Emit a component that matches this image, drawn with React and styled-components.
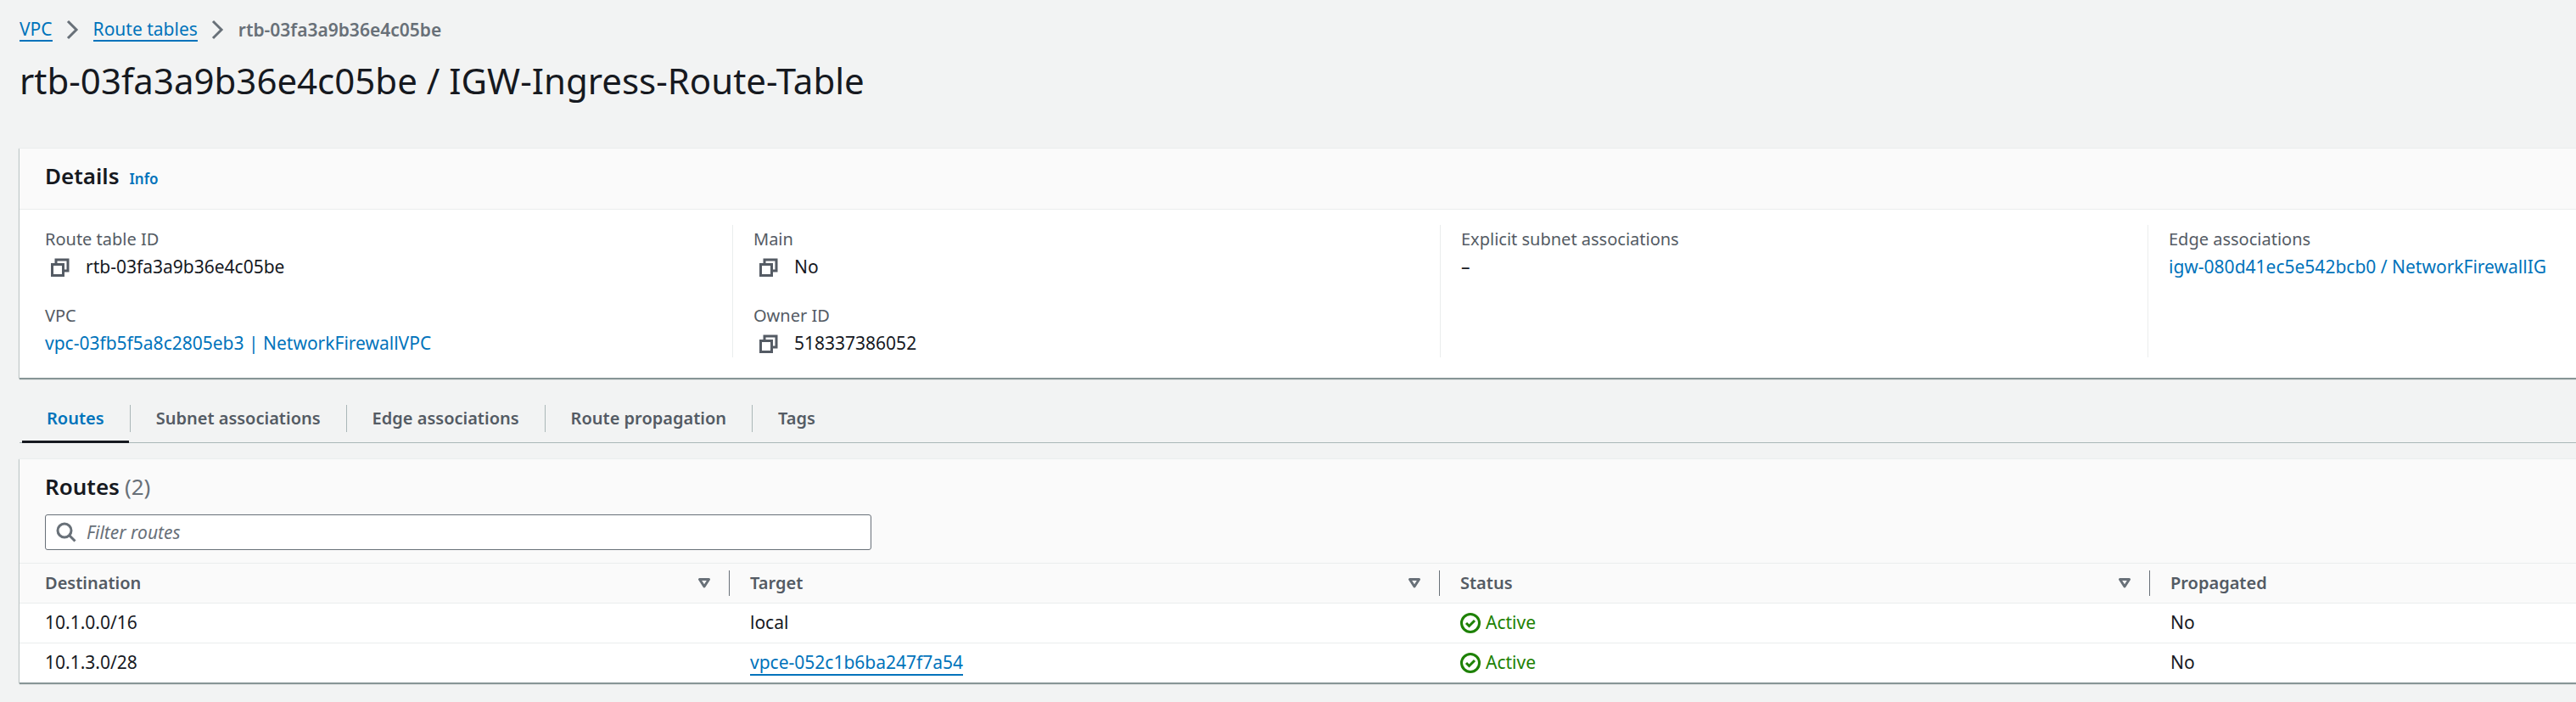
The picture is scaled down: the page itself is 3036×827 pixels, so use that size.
import React from 'react';
import styled, { createGlobalStyle, css } from 'styled-components';

const Global = createGlobalStyle`
  *, *::before, *::after { box-sizing: border-box; }
  body {
    margin: 0;
    background: #f2f3f3;
    color: #16191f;
    font: 21px/33px "Noto Sans", sans-serif;
  }
`;

const Page = styled.main`
  padding: 18px 0 23px 23px;
`;

const Link = styled.a`
  color: #0073bb;
  text-decoration: none;
  ${(p) => p.$underlined && css`
    border-bottom: 2px solid #0073bb;
    line-height: 26px;
  `}
`;

const Crumbs = styled.ol`
  display: flex;
  align-items: center;
  gap: 16px;
  margin: 0;
  padding: 0;
  list-style: none;
  line-height: 26px;
  height: 33px;
`;

const Crumb = styled.li`
  display: flex;
  align-items: center;
  gap: 16px;
  color: #687078;
  font-weight: ${(p) => (p.$current ? 600 : 400)};
`;

const PageTitle = styled.h1`
  margin: 14px 0 49px;
  font-size: 42px;
  font-weight: 400;
  line-height: 60px;
`;

const Card = styled.section`
  background: #fff;
  border-top: 1px solid #eaeded;
  box-shadow: 0 2px 1px #879596, -1px 1px 1px #c9d0d0;
`;

const CardHeader = styled.header`
  display: flex;
  flex-direction: column;
  gap: 16px;
  padding: ${(p) => (p.$compact ? '16px 30px 15px' : '16px 30px 22px')};
  background: #fafafa;
  border-bottom: 1px solid #eaeded;
`;

const TitleRow = styled.div`
  display: flex;
  align-items: baseline;
  gap: ${(p) => (p.$tight ? 6 : 12)}px;
`;

const CardTitle = styled.h2`
  margin: 0;
  font-size: 26px;
  font-weight: 600;
  line-height: 33px;
`;

const Count = styled.span`
  font-size: 26px;
  color: #687078;
`;

const InfoLink = styled(Link)`
  font-size: 17px;
  font-weight: 600;
  line-height: 20px;
`;

const DetailsGrid = styled.div`
  display: grid;
  grid-template-columns: 840fr 834fr 834fr 505fr;
  padding: 18px 0 24px;
`;

const DetailsColumn = styled.dl`
  display: flex;
  flex-direction: column;
  gap: 24px;
  margin: 0;
  padding: 0 24px;
  border-left: 1px solid #eaeded;
  &:first-child {
    padding-left: 30px;
    border-left: 0;
  }
`;

const Label = styled.dt`
  color: #545b64;
  font-size: 20px;
`;

const Value = styled.dd`
  display: flex;
  align-items: center;
  margin: 0;
  white-space: nowrap;
`;

const CopyButton = styled.button`
  display: flex;
  margin: 0 18px 0 6px;
  padding: 0;
  border: 0;
  background: none;
  color: #545b64;
`;

const Tabs = styled.div`
  display: flex;
  margin: 20px 0 18px;
  padding-left: 3px;
  border-bottom: 1px solid #aab7b8;
`;

const TabSlot = styled.div`
  display: flex;
  align-items: center;
  &:not(:last-child)::after {
    content: '';
    width: 1px;
    height: 32px;
    margin: 0 1px;
    background: #aab7b8;
  }
`;

const Tab = styled.button`
  height: 57px;
  margin-bottom: -1px;
  padding: 0 29px;
  border: 0;
  border-bottom: 3px solid ${(p) => (p['aria-selected'] ? '#16191f' : 'transparent')};
  background: none;
  color: ${(p) => (p['aria-selected'] ? '#0073bb' : '#545b64')};
  font: inherit;
  font-size: 20px;
  font-weight: 600;
`;

const Search = styled.label`
  display: flex;
  align-items: center;
  gap: 12px;
  width: 33%;
  height: 42px;
  padding: 0 12px;
  background: #fff;
  border: 1px solid #687078;
  border-radius: 3px;
  color: #687078;
`;

const SearchInput = styled.input`
  flex: 1;
  min-width: 0;
  padding: 0;
  border: 0;
  outline: 0;
  background: none;
  font: inherit;
  &::placeholder {
    color: #687078;
    font-style: italic;
    opacity: 1;
  }
`;

const Table = styled.table`
  width: 100%;
  table-layout: fixed;
  border-collapse: collapse;
  text-align: left;
`;

const HeadCell = styled.th`
  width: ${(p) => p.$width};
  height: 46px;
  padding: 0;
  background: #fafafa;
  border-bottom: 1px solid #eaeded;
  color: #545b64;
  font-size: 20px;
  font-weight: 600;
`;

const HeadContent = styled.div`
  display: flex;
  align-items: center;
  justify-content: space-between;
  height: 30px;
  padding: 0 21px 0 24px;
  border-right: ${(p) => (p.$last ? '0' : '1px solid #687078')};
  th:first-child & { padding-left: 30px; }
`;

const SortButton = styled.button`
  display: flex;
  padding: 0;
  border: 0;
  background: none;
  color: #687078;
`;

const Cell = styled.td`
  height: 47px;
  padding: 0 24px;
  border-bottom: 1px solid #eaeded;
  &:first-child { padding-left: 30px; }
  tr:last-child & { border-bottom: 0; }
`;

const Status = styled.span`
  display: flex;
  align-items: center;
  gap: 6px;
  color: #1d8102;
`;

const Chevron = () => (
  <svg width="16" height="24" viewBox="0 0 16 24" fill="none" stroke="#687078" strokeWidth="3" aria-hidden="true">
    <path d="M2 2l10 10L2 22" />
  </svg>
);

const CopyIcon = () => (
  <svg width="24" height="24" viewBox="0 0 24 24" fill="none" stroke="currentColor" strokeWidth="3" aria-hidden="true">
    <path d="M7 8V3h14v13h-5" />
    <path d="M2.500 8.500h13v13h-13z" />
  </svg>
);

const SearchIcon = () => (
  <svg width="24" height="24" viewBox="0 0 24 24" fill="none" stroke="currentColor" strokeWidth="3" aria-hidden="true">
    <circle cx="10" cy="10" r="8" />
    <path d="M15.500 15.500l7 7" />
  </svg>
);

const SortIcon = () => (
  <svg width="16" height="14" viewBox="0 0 16 14" fill="none" stroke="currentColor" strokeWidth="3" strokeLinejoin="round" aria-hidden="true">
    <path d="M2.500 2.500h11L8 11z" />
  </svg>
);

const CheckIcon = () => (
  <svg width="24" height="24" viewBox="0 0 24 24" fill="none" stroke="currentColor" strokeWidth="3" aria-hidden="true">
    <circle cx="12" cy="12" r="10.500" />
    <path d="M7 12l3.500 3.500 6.500-6.500" />
  </svg>
);

const details = [
  [
    { label: 'Route table ID', value: 'rtb-03fa3a9b36e4c05be', copy: true },
    { label: 'VPC', value: 'vpc-03fb5f5a8c2805eb3 | NetworkFirewallVPC', link: true },
  ],
  [
    { label: 'Main', value: 'No', copy: true },
    { label: 'Owner ID', value: '518337386052', copy: true },
  ],
  [{ label: 'Explicit subnet associations', value: '–' }],
  [{ label: 'Edge associations', value: 'igw-080d41ec5e542bcb0 / NetworkFirewallIG', link: true }],
];

const tabs = ['Routes', 'Subnet associations', 'Edge associations', 'Route propagation', 'Tags'];

const columns = ['Destination', 'Target', 'Status', 'Propagated'];

const routes = [
  { destination: '10.1.0.0/16', target: 'local' },
  { destination: '10.1.3.0/28', target: 'vpce-052c1b6ba247f7a54', link: true },
];

export default function App() {
  return (
    <Page>
      <Global />
      <nav aria-label="Breadcrumbs">
        <Crumbs>
          <Crumb><Link href="#vpc" $underlined>VPC</Link><Chevron /></Crumb>
          <Crumb><Link href="#tables" $underlined>Route tables</Link><Chevron /></Crumb>
          <Crumb $current aria-current="page">rtb-03fa3a9b36e4c05be</Crumb>
        </Crumbs>
      </nav>
      <PageTitle>rtb-03fa3a9b36e4c05be / IGW-Ingress-Route-Table</PageTitle>

      <Card>
        <CardHeader>
          <TitleRow>
            <CardTitle>Details</CardTitle>
            <InfoLink href="#info">Info</InfoLink>
          </TitleRow>
        </CardHeader>
        <DetailsGrid>
          {details.map((items) => (
            <DetailsColumn key={items[0].label}>
              {items.map(({ label, value, copy, link }) => (
                <div key={label}>
                  <Label>{label}</Label>
                  <Value>
                    {copy && <CopyButton type="button" aria-label={`Copy ${label}`}><CopyIcon /></CopyButton>}
                    {link ? <Link href="#resource">{value}</Link> : value}
                  </Value>
                </div>
              ))}
            </DetailsColumn>
          ))}
        </DetailsGrid>
      </Card>

      <Tabs role="tablist">
        {tabs.map((tab, i) => (
          <TabSlot key={tab} role="presentation">
            <Tab type="button" role="tab" aria-selected={i === 0}>{tab}</Tab>
          </TabSlot>
        ))}
      </Tabs>

      <Card>
        <CardHeader $compact>
          <TitleRow $tight>
            <CardTitle>Routes</CardTitle>
            <Count>(2)</Count>
          </TitleRow>
          <Search>
            <SearchIcon />
            <SearchInput type="text" placeholder="Filter routes" aria-label="Filter routes" />
          </Search>
        </CardHeader>
        <Table>
          <thead>
            <tr>
              {columns.map((name, i) => {
                const last = i === columns.length - 1;
                return (
                  <HeadCell key={name} scope="col" $width={last ? 'auto' : '27.78%'}>
                    <HeadContent $last={last}>
                      {name}
                      {!last && <SortButton type="button" aria-label={`Sort by ${name}`}><SortIcon /></SortButton>}
                    </HeadContent>
                  </HeadCell>
                );
              })}
            </tr>
          </thead>
          <tbody>
            {routes.map(({ destination, target, link }) => (
              <tr key={destination}>
                <Cell>{destination}</Cell>
                <Cell>{link ? <Link href="#endpoint" $underlined>{target}</Link> : target}</Cell>
                <Cell><Status><CheckIcon />Active</Status></Cell>
                <Cell>No</Cell>
              </tr>
            ))}
          </tbody>
        </Table>
      </Card>
    </Page>
  );
}
